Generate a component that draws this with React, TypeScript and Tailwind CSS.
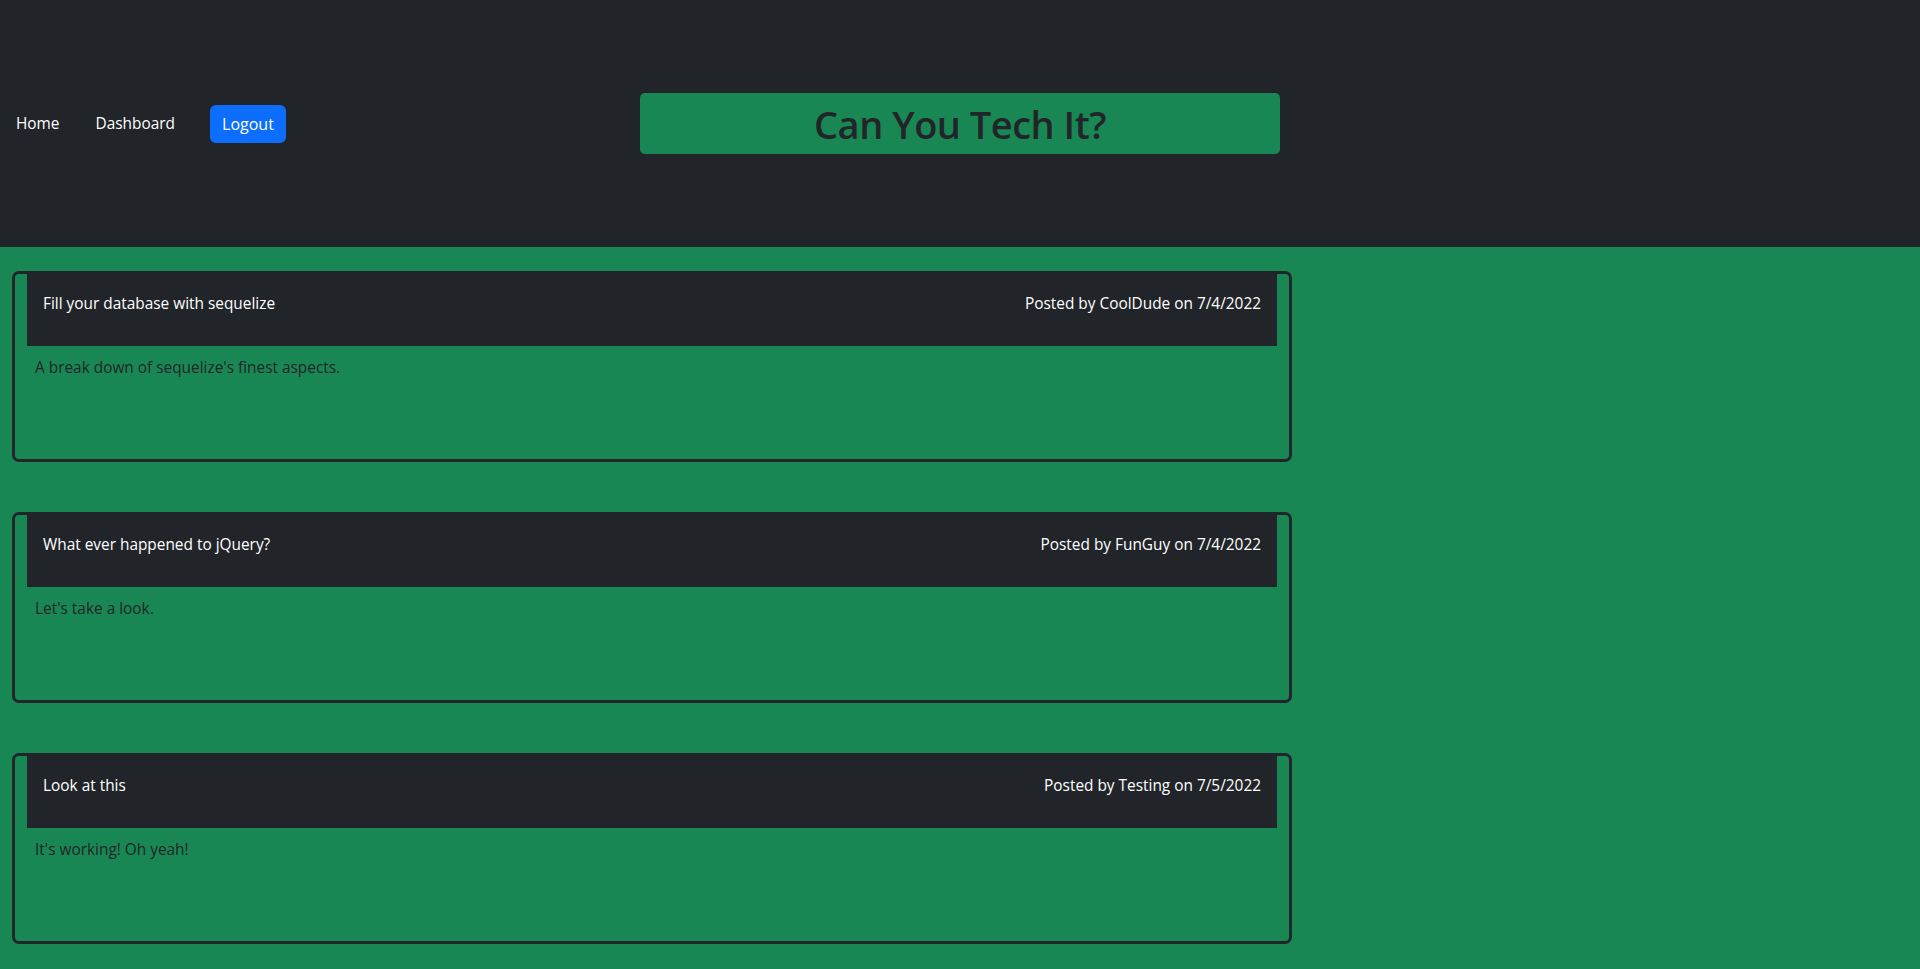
import React from "react"

const posts = [
  { title: "Fill your database with sequelize", author: "CoolDude", date: "7/4/2022", body: "A break down of sequelize's finest aspects." },
  { title: "What ever happened to jQuery?", author: "FunGuy", date: "7/4/2022", body: "Let's take a look." },
  { title: "Look at this", author: "Testing", date: "7/5/2022", body: "It's working! Oh yeah!" },
]

function PostCard({ post }: { post: (typeof posts)[number] }) {
  return (
    <div className="h-[191px] w-[1280px] rounded-[7px] border-[3px] border-[#212529]">
      <div className="mx-3 flex h-[72px] justify-between bg-[#212529] px-4 pt-[18px] text-white">
        <span>{post.title}</span>
        <span>
          Posted by {post.author} on {post.date}
        </span>
      </div>
      <p className="pl-5 pt-[10px] text-[#212529]">{post.body}</p>
    </div>
  )
}

export default function App() {
  return (
    <div className="min-h-screen bg-[#198754] text-[15.4px] leading-6" style={{ fontFamily: '"Open Sans", "Noto Sans", sans-serif' }}>
      <header className="flex h-[247px] items-center bg-[#212529]">
        <nav className="flex w-[640px] items-center">
          <a className="ml-4 text-white">Home</a>
          <a className="ml-[36px] text-white">Dashboard</a>
          <button className="ml-[35px] h-[38px] w-[76px] rounded-[6px] bg-[#0d6efd] text-[16px] text-white">Logout</button>
        </nav>
        <div className="flex h-[61px] w-[640px] items-center justify-center rounded-[5px] bg-[#198754]">
          <h1 className="text-[38px] font-semibold leading-[48px] tracking-[-0.5px] text-[#212529]">Can You Tech It?</h1>
        </div>
      </header>
      <main className="flex flex-col gap-[50px] pb-5 pl-3 pt-6">
        {posts.map((post, i) => (
          <PostCard key={i} post={post} />
        ))}
      </main>
    </div>
  )
}
